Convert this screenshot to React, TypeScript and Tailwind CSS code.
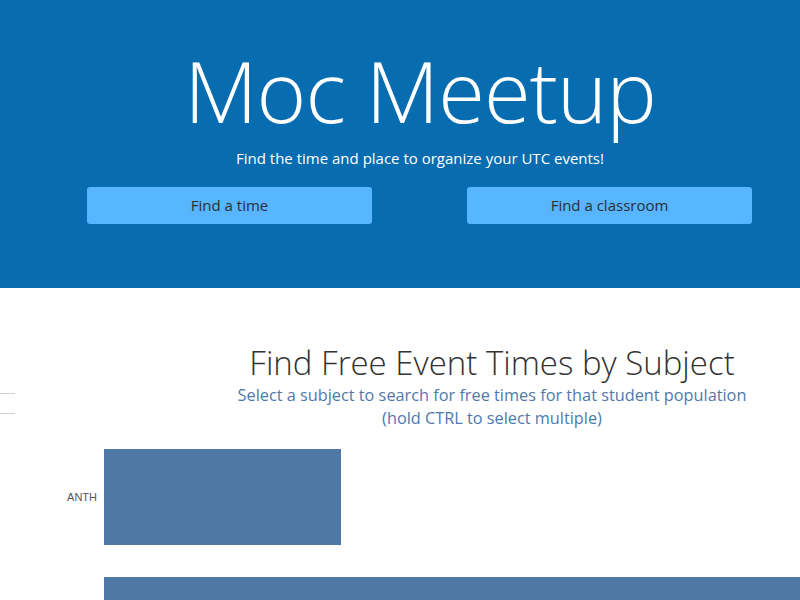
import React from "react";

// second bar runs off the bottom of the view, its label sits below the fold
const subjects = [
  { code: "ANTH", width: 237 },
  { code: "", width: 720 },
];

function Hero() {
  return (
    <header className="flex h-[288px] flex-col items-center bg-[#076cb0] pl-[40px] font-['Open_Sans',sans-serif] text-white">
      <h1 className="mt-[40px] text-[85px] font-light leading-[100px] tracking-[-1px]">Moc Meetup</h1>
      <p className="mt-[8px] text-[15px] leading-5">Find the time and place to organize your UTC events!</p>
      <div className="mt-[19px] flex w-full justify-between pl-[47px] pr-[48px]">
        <button className="h-[37px] w-[285px] rounded-[3px] bg-[#58b5ff] text-[15px] text-[#2a2f36]">Find a time</button>
        <button className="h-[37px] w-[285px] rounded-[3px] bg-[#58b5ff] text-[15px] text-[#2a2f36]">Find a classroom</button>
      </div>
    </header>
  );
}

function SubjectChart() {
  return (
    <section className="relative h-[312px] overflow-hidden bg-white font-['Open_Sans',sans-serif]">
      <div className="absolute left-0 top-[105px] h-px w-[15px] bg-[#cfcfcf]" />
      <div className="absolute left-0 top-[125px] h-px w-[15px] bg-[#cfcfcf]" />
      <div className="flex flex-col items-center pl-[184px]">
        <h2 className="mt-[55px] text-[33px] font-light leading-[40px] text-[#333]">Find Free Event Times by Subject</h2>
        <div className="h-[45px] overflow-hidden">
          <p className="mt-[1px] text-center text-[16.3px] leading-[23px] text-[#4f79ab]">
            Select a subject to search for free times for that student population
            <br />
            (hold CTRL to select multiple)
          </p>
        </div>
      </div>
      <div className="mt-[21px] flex flex-col gap-[32px]">
        {subjects.map((s, i) => (
          <div key={i} className="flex h-[96px] items-center">
            <span className="w-[98px] shrink-0 pr-[1px] text-right font-['Liberation_Sans',sans-serif] text-[11px] text-[#555]">{s.code}</span>
            <div className="ml-[6px] h-full shrink-0 bg-[#4e79a7]" style={{ width: s.width }} />
          </div>
        ))}
      </div>
    </section>
  );
}

export default function App() {
  return (
    <div className="h-[600px] w-[800px] overflow-hidden bg-white">
      <Hero />
      <SubjectChart />
    </div>
  );
}
